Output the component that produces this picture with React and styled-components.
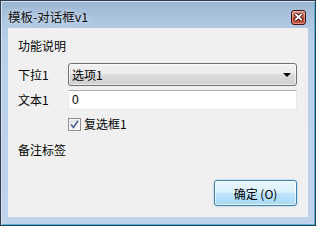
import React from 'react'
import styled, { createGlobalStyle } from 'styled-components'

const Global = createGlobalStyle`
  html, body {
    margin: 0;
    padding: 0;
    background: #ffffff;
  }
  body {
    font-family: "Liberation Sans", "Noto Sans CJK SC", sans-serif;
    font-size: 12px;
    color: #000;
  }
`

export default function App() {
  return (
    <>
      <Global />
      <Janela>
        <BarraTitulo>
          <Titulo>模板-对话框v1</Titulo>
          <BotaoFechar>
            <svg width="9" height="8" viewBox="0 0 9 8">
              <path d="M1 0.5 L8 7.5 M8 0.5 L1 7.5" stroke="#3a1010" strokeWidth="3.4" />
              <path d="M1.2 0.8 L7.8 7.2 M7.8 0.8 L1.2 7.2" stroke="#ffffff" strokeWidth="1.8" />
            </svg>
          </BotaoFechar>
        </BarraTitulo>

        <Cliente>
          <Rotulo>功能说明</Rotulo>

          <Linha $top={9}>
            <Rotulo>下拉1</Rotulo>
            <Combo>
              <span>选项1</span>
              <Seta />
            </Combo>
          </Linha>

          <Linha $top={4}>
            <Rotulo>文本1</Rotulo>
            <Campo defaultValue="0" />
          </Linha>

          <Linha $top={6}>
            <span />
            <Marcar>
              <Caixa>
                <svg width="9" height="9" viewBox="0 0 9 9">
                  <path d="M1 4.5 L3.5 7.5 L8 0.8" fill="none" stroke="#4a5f97" strokeWidth="1.6" />
                </svg>
              </Caixa>
              复选框1
            </Marcar>
          </Linha>

          <Rotulo $top={10}>备注标签</Rotulo>

          <Rodape>
            <Botao>确定 (O)</Botao>
          </Rodape>
        </Cliente>
      </Janela>
    </>
  )
}

const Janela = styled.div`
  width: 316px;
  height: 226px;
  box-sizing: border-box;
  border: 1px solid #2f3d4e;
  box-shadow: inset 1px 1px 0 #d6e3f1, inset -1px -1px 0 #4cb3da;
  background: linear-gradient(to bottom, #9bb5d2 0px, #aec6e1 20px, #bad0e9 40px, #bfd4eb 100%);
  display: flex;
  flex-direction: column;
  overflow: hidden;
`

const BarraTitulo = styled.div`
  height: 27px;
  display: flex;
  align-items: center;
  justify-content: space-between;
  padding: 2px 9px 0 7px;
  box-sizing: border-box;
`

const Titulo = styled.div`
  font-family: "Noto Sans CJK SC", "Liberation Sans", sans-serif;
  font-size: 12.5px;
  color: #141414;
  text-shadow: 0 0 6px rgba(255, 255, 255, 0.7);
  padding-top: 1px;
`

const BotaoFechar = styled.div`
  width: 15px;
  height: 15px;
  box-sizing: border-box;
  border: 1px solid #3f1616;
  border-radius: 3px;
  background: linear-gradient(to bottom, #dc9486 0%, #c96552 45%, #b13f2b 55%, #c95a42 100%);
  box-shadow: inset 0 0 0 1px rgba(255, 210, 200, 0.45);
  display: flex;
  align-items: center;
  justify-content: center;
  margin-top: 3px;
`

const Cliente = styled.div`
  flex: 1;
  margin: 0 7px 8px 7px;
  background: #f0f0f0;
  padding: 10px 11px 11px 10px;
  display: flex;
  flex-direction: column;
  font-family: "Noto Sans CJK SC", "Liberation Sans", sans-serif;
`

const Rotulo = styled.div`
  line-height: 16px;
  font-size: 12px;
  margin-top: ${p => p.$top || 0}px;
`

const Linha = styled.div`
  display: grid;
  grid-template-columns: 50px 1fr;
  align-items: center;
  margin-top: ${p => p.$top}px;
`

const Combo = styled.div`
  height: 23px;
  box-sizing: border-box;
  border: 1px solid #707070;
  border-radius: 3px;
  background: linear-gradient(to bottom, #f2f2f2 0%, #ebebeb 50%, #dddddd 50%, #cfcfcf 100%);
  box-shadow: inset 0 0 0 1px rgba(255, 255, 255, 0.6);
  display: flex;
  align-items: center;
  justify-content: space-between;
  padding: 0 5px 0 3px;
  line-height: 16px;
`

const Seta = styled.span`
  width: 0;
  height: 0;
  border-left: 4px solid transparent;
  border-right: 4px solid transparent;
  border-top: 4px solid #000;
  margin-top: 1px;
`

const Campo = styled.input`
  height: 20px;
  box-sizing: border-box;
  border: 1px solid #e3e9ef;
  border-top-color: #abadb3;
  background: #fff;
  padding: 0 3px;
  font-family: "Liberation Sans", "Noto Sans CJK SC", sans-serif;
  font-size: 12px;
  outline: none;
  width: 100%;
`

const Marcar = styled.label`
  display: flex;
  align-items: center;
  gap: 3px;
  line-height: 16px;
`

const Caixa = styled.span`
  width: 13px;
  height: 13px;
  box-sizing: border-box;
  border: 1px solid #8f8f8f;
  background: linear-gradient(135deg, #dcdcdc 0%, #f4f4f4 60%, #ffffff 100%);
  box-shadow: inset 0 0 0 1px #f5f5f5;
  display: flex;
  align-items: center;
  justify-content: center;
`

const Rodape = styled.div`
  margin-top: auto;
  display: flex;
  justify-content: flex-end;
`

const Botao = styled.button`
  width: 83px;
  height: 26px;
  box-sizing: border-box;
  border: 1px solid #3c7fb1;
  border-radius: 3px;
  background: linear-gradient(to bottom, #eaf6fd 0%, #d9f0fc 50%, #bee6fd 50%, #a7d9f5 100%);
  box-shadow: inset 0 0 0 1px rgba(255, 255, 255, 0.7), 0 0 2px rgba(70, 160, 220, 0.6);
  font-family: "Noto Sans CJK SC", "Liberation Sans", sans-serif;
  font-size: 12px;
  color: #000;
  padding: 0;
`
